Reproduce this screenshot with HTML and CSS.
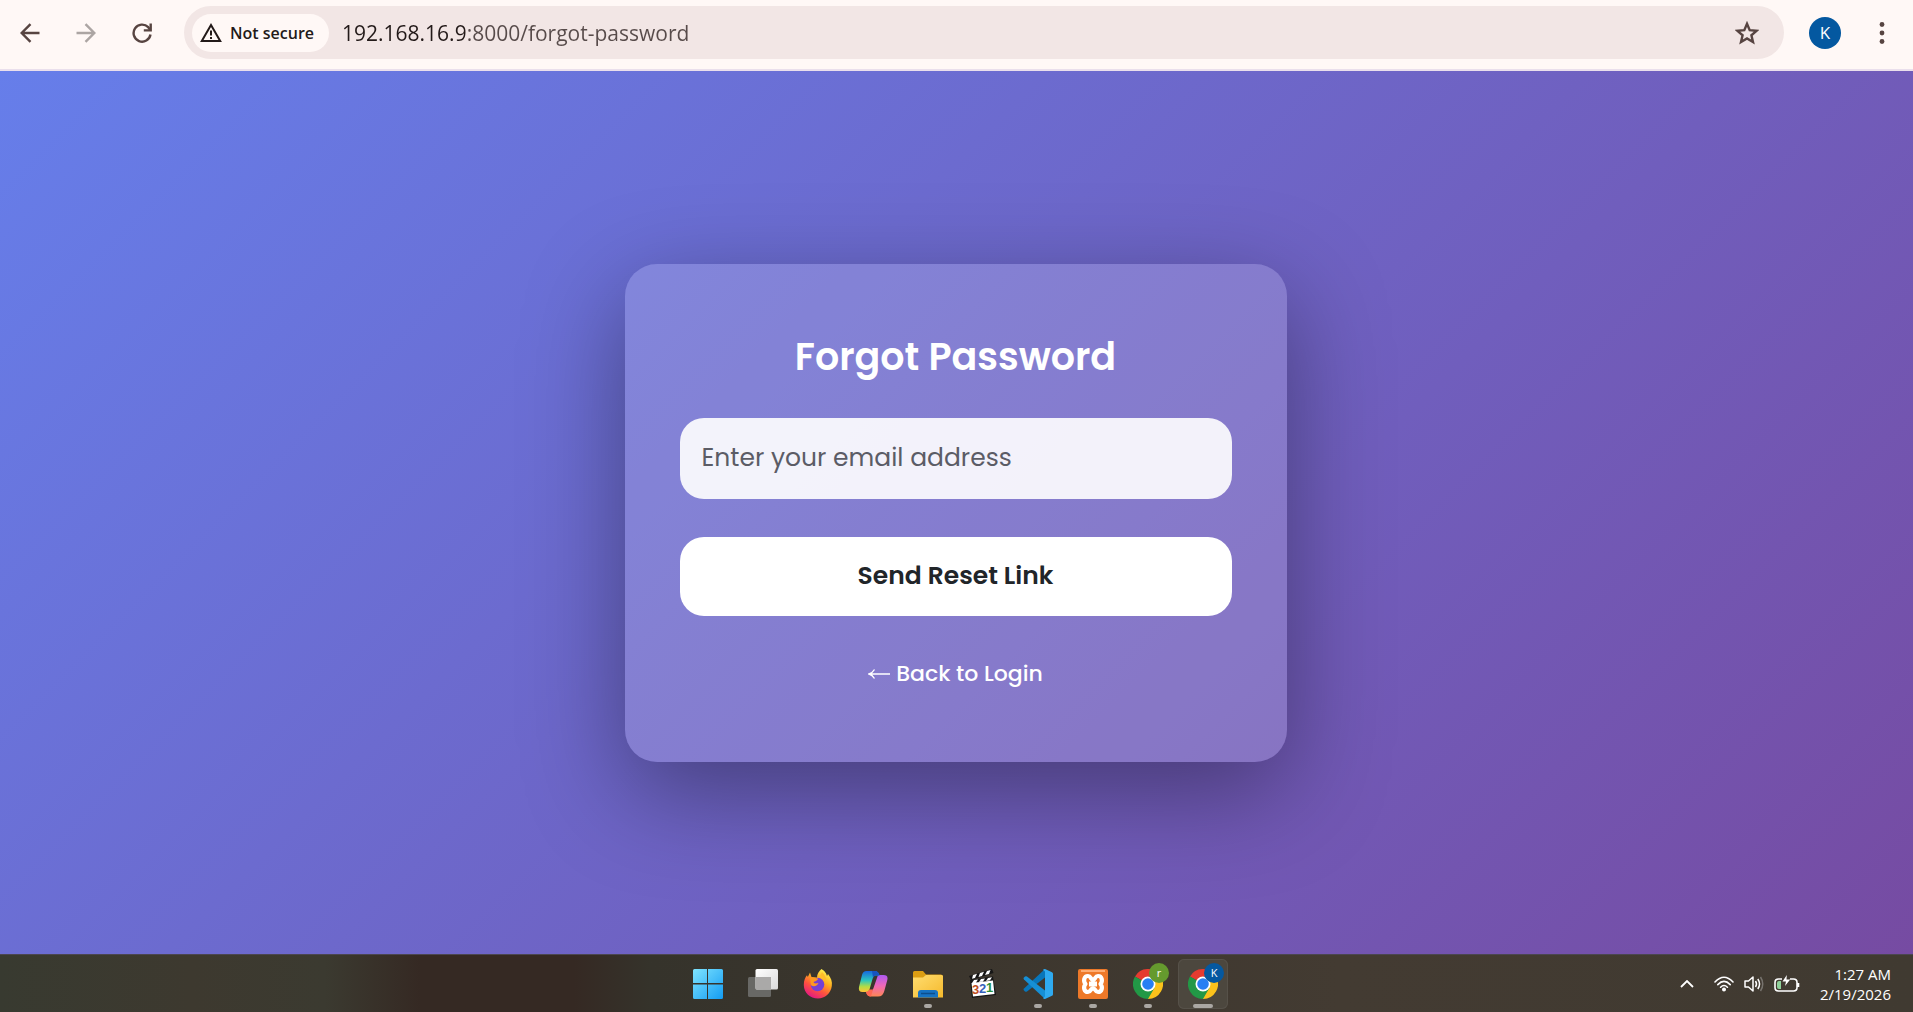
FILE: index.html
```html
<!DOCTYPE html>
<html lang="en">
<head>
    <meta charset="UTF-8">
    <meta name="viewport" content="width=device-width, initial-scale=1.0">
    <title>Forgot Password</title>
    <link rel="stylesheet" href="styles.css">
</head>
<body>
    <header class="toolbar">
        <button type="button" class="tool-btn" aria-label="Back">
            <svg width="20" height="20" viewBox="0 0 20 20" fill="none" stroke="currentColor" stroke-width="2.4"><path d="M19.5 10H2M10.5 1.200L1.700 10l8.800 8.800"/></svg>
        </button>
        <button type="button" class="tool-btn tool-btn-off" aria-label="Forward">
            <svg width="20" height="20" viewBox="0 0 20 20" fill="none" stroke="currentColor" stroke-width="2.4"><path d="M.5 10H18M9.500 1.200L18.300 10l-8.800 8.800"/></svg>
        </button>
        <button type="button" class="tool-btn" aria-label="Reload">
            <svg width="20" height="20" viewBox="0 0 20 20" fill="none" stroke="currentColor" stroke-width="2.4"><path d="M18.500 11.500A8.500 8.500 0 1 1 16.200 4.200L18.400 7"/><path d="M18.700 .5V7.400H11.800"/></svg>
        </button>
        <div class="address-bar">
            <button type="button" class="site-info">
                <svg width="22" height="20" viewBox="0 0 22 20" fill="none" stroke="currentColor" stroke-width="2"><path d="M11 2L20.200 18H1.800Z"/><path d="M11 7.500v5M11 14v2"/></svg>
                Not secure
            </button>
            <input type="text" class="url" aria-label="Address" value="192.168.16.9:8000/forgot-password">
            <button type="button" class="star-btn" aria-label="Bookmark this page">
                <svg width="24" height="24" viewBox="0 0 24 24" fill="none" stroke="currentColor" stroke-width="2.4"><path d="M12 2.800l2.700 6.400 6.900.6-5.200 4.500 1.600 6.800-6-3.600-6 3.600 1.600-6.800L2.400 9.800l6.900-.6z"/></svg>
            </button>
        </div>
        <button type="button" class="profile" aria-label="Profile">K</button>
        <button type="button" class="menu-btn" aria-label="Menu">
            <svg width="6" height="22" viewBox="0 0 6 22" fill="currentColor"><circle cx="3" cy="2.500" r="2.400"/><circle cx="3" cy="11" r="2.400"/><circle cx="3" cy="19.500" r="2.400"/></svg>
        </button>
    </header>

    <main class="page">
        <div class="card">
            <h1>Forgot Password</h1>
            <form id="forgotForm">
                <input type="email" id="email" class="email" aria-label="Email address" placeholder="Enter your email address" required>
                <button type="submit" class="send-btn">Send Reset Link</button>
            </form>
            <a href="#" class="back-link"><svg width="22" height="12" viewBox="0 0 22 12" fill="none" stroke="currentColor" stroke-width="1.400"><path d="M22 6H1.500M6.500 1.500C5 4 3.500 5.200 1 6c2.500.8 4 2 5.500 4.500"/></svg>Back to Login</a>
        </div>
    </main>

    <footer class="taskbar">
        <nav class="apps">
            <button type="button" class="app" aria-label="Start">
                <svg width="30" height="30" viewBox="0 0 30 30">
                    <defs><linearGradient id="win" x1="0" y1="0" x2="30" y2="30" gradientUnits="userSpaceOnUse"><stop offset="0" stop-color="#7fe4ff"/><stop offset="1" stop-color="#139cf3"/></linearGradient></defs>
                    <path fill="url(#win)" d="M1.500 0H14v14H0V1.500Q0 0 1.500 0zM15 0h13.500Q30 0 30 1.500V14H15zM0 15.500h14V30H1.500Q0 30 0 28.500zM15 15.500h15v13Q30 30 28.500 30H15z"/>
                </svg>
            </button>
            <button type="button" class="app" aria-label="Task view">
                <svg width="30" height="30" viewBox="0 0 30 30">
                    <defs><linearGradient id="pane" x1="0" y1="0" x2="1" y2="1"><stop offset="0" stop-color="#fff"/><stop offset="1" stop-color="#dadada"/></linearGradient></defs>
                    <rect x="0" y="8" width="23" height="20" rx="1.500" fill="#686865"/>
                    <rect x="7.500" y="0" width="22.500" height="20.500" rx="1.500" fill="url(#pane)"/>
                    <path d="M7.500 8H23v12.500H9q-1.500 0-1.500-1.500z" fill="#aaa9a8"/>
                </svg>
            </button>
            <button type="button" class="app" aria-label="Firefox">
                <svg width="30" height="30" viewBox="0 0 30 30">
                    <defs><linearGradient id="fox" x1="24" y1="2" x2="8" y2="29" gradientUnits="userSpaceOnUse"><stop offset="0" stop-color="#fff44f"/><stop offset=".35" stop-color="#ffad1f"/><stop offset=".65" stop-color="#ff533e"/><stop offset="1" stop-color="#e31587"/></linearGradient></defs>
                    <path fill="url(#fox)" d="M18.500 0c4 2.500 5 5 5.500 7l1-2c3 4 4.500 7.500 3.800 12C27.800 24.500 22 29.500 15 29.500 7 29.500 1 24 .8 16 .7 11 2.500 8 4 6.200L4.800 8 7 3.500 8.500 8 14 8.500c0-3.500 2-6.500 4.500-8.500z"/>
                    <circle cx="14.500" cy="15.500" r="6.800" fill="#7440d5"/>
                    <path fill="#ff9722" d="M7 8l8 1.500c0 2-3 3-4.500 3.500 1 2 3 1.500 5 1-1 3-5 4.500-7.700 2z"/>
                    <path fill="#ffbc29" d="M17 7c4 1 6 4 6 8 1.500-4-1-9-4-12z"/>
                </svg>
            </button>
            <button type="button" class="app" aria-label="Copilot">
                <svg width="30" height="30" viewBox="0 0 30 30">
                    <defs>
                        <linearGradient id="copA" x1="0" y1="0" x2="0" y2="1"><stop offset="0" stop-color="#1668df"/><stop offset=".45" stop-color="#2cc7bd"/><stop offset=".75" stop-color="#b5dc43"/><stop offset="1" stop-color="#ffc237"/></linearGradient>
                        <linearGradient id="copB" x1="0" y1="0" x2="0" y2="1"><stop offset="0" stop-color="#ad58f2"/><stop offset=".5" stop-color="#ef68b7"/><stop offset="1" stop-color="#ff8654"/></linearGradient>
                    </defs>
                    <path fill="url(#copB)" d="M20 6h5.500q5 0 3.800 5l-3 11Q25 27.500 20 27.500h-7q-4 0-5-5h3.500q3 0 4-3.500z"/>
                    <path fill="url(#copA)" d="M8.500 2H17q3.500 0 4.500 4.500H18q-2.500 0-3.500 3.500l-3 10.500q-.8 2.500-3.500 2.500H4.500Q0 23 1 18L4 6Q5 2 8.500 2z"/>
                    <path fill="#1753bf" d="M14 2h3q3.500 0 4.500 4.500H18q-2 0-3 2z"/>
                    <path fill="#ff6752" d="M7 23q3.500 0 4.500-2.500H15l-2 7q-4 0-5-4.500z"/>
                </svg>
            </button>
            <button type="button" class="app running" aria-label="File Explorer">
                <svg width="30" height="30" viewBox="0 0 30 30">
                    <defs><linearGradient id="dir" x1="0" y1="0" x2="1" y2="1"><stop offset="0" stop-color="#ffdd70"/><stop offset="1" stop-color="#f5b92c"/></linearGradient></defs>
                    <path fill="#dc9e13" d="M0 3.500Q0 2 1.500 2H10l3 3.500h15Q30 5.500 30 8v8H0z"/>
                    <path fill="url(#dir)" d="M0 8.500h10L13 6h16l1 1v21.500H0z"/>
                    <path fill="#1673c4" d="M5 28.500V24q0-3 3-3h14q3 0 3 3v4.500z"/>
                    <path stroke="#0c4e8d" stroke-width="1.500" d="M8 24.500h14"/>
                </svg>
            </button>
            <button type="button" class="app" aria-label="Media Player Classic">
                <svg width="30" height="30" viewBox="0 0 30 30">
                    <path fill="#161616" d="M1 7L24 0l1.500 4L3 11zM2 11l23-3.500L28 26 4 29z"/>
                    <path fill="#fff" d="M5 6l4-1.200L7 9 4 9.800zM12 4l4-1.300L14 7l-3.500 1zM19 2l3.500-1L21 5l-4 1zM6 11l4-.6L8 13.500l-4 .6zM13 10l4-.6-2 3-4 .5zM20 9l4-.7-2 3-4 .6zM3.500 14L25 11.500 26.500 25 5 27.500z"/>
                    <g font-family="Liberation Sans, sans-serif" font-weight="700" font-size="13">
                        <text x="4" y="25" fill="#c04f22">3</text>
                        <text x="11" y="24" fill="#3560ba">2</text>
                        <text x="18" y="23" fill="#28903c">1</text>
                    </g>
                </svg>
            </button>
            <button type="button" class="app running" aria-label="Visual Studio Code">
                <svg width="30" height="30" viewBox="0 0 30 30">
                    <path fill="#0876ba" d="M1 19.500L22 0v8.500L4 22.500q-1 .7-2 0l-1-1q-1-1 0-2z"/>
                    <path fill="#168fd5" d="M1 10.500L22 30v-8.500L4 7.500q-1-.7-2 0l-1 1q-1 1 0 2z"/>
                    <path fill="#2faaf0" d="M22 0l7 3.200q1 .5 1 1.500v20.600q0 1-1 1.500L22 30q-1.500 0-2-1l2-1.500v-25L20 1q.5-1 2-1z"/>
                </svg>
            </button>
            <button type="button" class="app running" aria-label="XAMPP">
                <svg width="30" height="30" viewBox="0 0 30 30">
                    <rect width="30" height="30" rx="2" fill="#ee7929"/>
                    <path d="M3 2h24" stroke="#ffad72" stroke-width="2"/>
                    <path fill="none" stroke="#fff" stroke-width="4.200" stroke-linejoin="round" d="M10 7c3 0 3 4 5 4s2-4 5-4c4 0 5 5 2.500 8C25 18 24 23 20 23c-3 0-3-4-5-4s-2 4-5 4c-4 0-5-5-2.500-8C5 12 6 7 10 7z"/>
                    <path d="M11 15h8" stroke="#fff" stroke-width="5"/>
                </svg>
            </button>
            <button type="button" class="app running" aria-label="Chrome, profile r">
                <svg width="30" height="30" viewBox="0 0 30 30">
                    <path fill="#e53b30" d="M15 15L2 7.500A15 15 0 0 1 28 7.500H15z"/>
                    <path fill="#fbc21b" d="M15 15l6.500-7.500H28A15 15 0 0 1 15 30z"/>
                    <path fill="#229846" d="M15 15l6.500 3.700L15 30A15 15 0 0 1 2 7.500z"/>
                    <circle cx="15" cy="15" r="7.500" fill="#fff"/><circle cx="15" cy="15" r="5.800" fill="#287ff3"/>
                </svg>
                <span class="badge badge-green">r</span>
            </button>
            <button type="button" class="app running active" aria-label="Chrome, profile K">
                <svg width="30" height="30" viewBox="0 0 30 30">
                    <path fill="#e53b30" d="M15 15L2 7.500A15 15 0 0 1 28 7.500H15z"/>
                    <path fill="#fbc21b" d="M15 15l6.500-7.500H28A15 15 0 0 1 15 30z"/>
                    <path fill="#229846" d="M15 15l6.500 3.700L15 30A15 15 0 0 1 2 7.500z"/>
                    <circle cx="15" cy="15" r="7.500" fill="#fff"/><circle cx="15" cy="15" r="5.800" fill="#287ff3"/>
                </svg>
                <span class="badge">K</span>
            </button>
        </nav>
        <div class="tray">
            <button type="button" class="tray-btn" aria-label="Show hidden icons">
                <svg width="14" height="8" viewBox="0 0 14 8" fill="none" stroke="currentColor" stroke-width="1.800"><path d="M1 7l6-6 6 6"/></svg>
            </button>
            <button type="button" class="tray-btn tray-status" aria-label="Network, volume and battery">
                <svg width="20" height="16" viewBox="0 0 20 16" fill="none" stroke="currentColor" stroke-width="1.600" stroke-linecap="round"><path d="M1 6Q10-3.500 19 6M3.800 8.600Q10 2.200 16.200 8.600M6.600 11.200Q10 7.800 13.400 11.200"/><circle cx="10" cy="13.500" r="1.200" fill="currentColor"/></svg>
                <svg width="20" height="18" viewBox="0 0 20 18" fill="none" stroke="currentColor" stroke-width="1.500" stroke-linejoin="round"><path d="M1 6h3.500L9 2v14l-4.500-4H1zM11.500 6q2 3 0 6M13.800 4q3.500 5 0 10"/><path d="M16.500 2q4.500 7 0 14" stroke="#77736e"/></svg>
                <svg width="26" height="18" viewBox="0 0 26 18" fill="none" stroke="currentColor" stroke-width="1.600"><path d="M8 4H4.500Q1 4 1 7.500v5Q1 16 4.500 16h15q3.500 0 3.500-3.500v-5Q23 4 19.500 4H16M24.500 8v4"/><path d="M3 8q0-2 2-2h2v8H5q-2 0-2-2z" fill="#8fd19a" stroke="none"/><path d="M12.800 0L8.500 6.500H12L11 11l5.200-6.500h-3.700z" fill="currentColor" stroke="none"/></svg>
            </button>
            <time class="clock" datetime="2026-02-19T01:27">1:27 AM<br>2/19/2026</time>
        </div>
    </footer>
</body>
</html>
```

FILE: styles.css
```css
* {
    box-sizing: border-box;
}

body {
    margin: 0;
    min-height: 100vh;
    display: flex;
    flex-direction: column;
    font-family: 'Poppins', 'Inter', sans-serif;
}

button, input {
    font-family: inherit;
    border: none;
    outline: none;
}

button {
    padding: 0;
    background: none;
    color: inherit;
    cursor: pointer;
}

svg {
    display: block;
    flex: none;
}

/* Browser toolbar */
.toolbar {
    display: flex;
    align-items: center;
    height: 71px;
    padding: 0 28px 4px 20px;
    background: #fff8f6;
    border-bottom: 2px solid #eadfec;
    color: #574441;
    font-family: 'Segoe UI', 'Open Sans', sans-serif;
}

.tool-btn {
    width: 20px;
    margin-right: 36px;
}

.tool-btn-off {
    color: #aca5a3;
}

.address-bar {
    flex: 1;
    display: flex;
    align-items: center;
    height: 53px;
    margin-right: 25px;
    margin-left: -4px;
    padding: 0 25px 0 8px;
    border-radius: 27px;
    background: #f2e6e5;
}

.site-info {
    display: flex;
    align-items: center;
    gap: 8px;
    height: 38px;
    padding: 0 15px 0 8px;
    border-radius: 19px;
    background: #fff8f6;
    color: #231a19;
    font-size: 16px;
    font-weight: 600;
    white-space: nowrap;
}

.url {
    flex: 1;
    min-width: 0;
    margin-left: 13px;
    padding: 0;
    /* host is darker than the port and path */
    background: linear-gradient(90deg, #231a19 123px, #574b4a 123px);
    -webkit-background-clip: text;
    background-clip: text;
    color: transparent;
    font-size: 21px;
}

.profile {
    width: 32px;
    height: 32px;
    margin-right: 38px;
    border-radius: 50%;
    background: #0458a0;
    color: #fff;
    font-size: 17px;
}

/* Page */
.page {
    flex: 1;
    display: flex;
    justify-content: center;
    align-items: center;
    padding-right: 2px;
    background: linear-gradient(135deg, #667eea, #764ba2);
}

.card {
    width: 100%;
    max-width: 662px;
    padding: 66px 55px 68px;
    border-radius: 32px;
    background: rgba(255, 255, 255, 0.16);
    box-shadow: 0 30px 100px rgba(0, 0, 0, 0.38);
    text-align: center;
}

h1 {
    margin: 0 0 34px;
    color: #fff;
    font-size: 38px;
    font-weight: 600;
    line-height: 54px;
}

form {
    display: flex;
    flex-direction: column;
    gap: 38px;
    margin-bottom: 38px;
}

.email {
    width: 100%;
    height: 81px;
    padding: 0 22px;
    border-radius: 24px;
    background: rgba(255, 255, 255, 0.9);
    color: #212529;
    font-size: 25px;
}

.email::placeholder {
    color: #5b5c66;
    opacity: 1;
}

.send-btn {
    height: 79px;
    border-radius: 24px;
    background: #fff;
    color: #212529;
    font-size: 25px;
    font-weight: 600;
}

.back-link {
    display: flex;
    justify-content: center;
    align-items: center;
    gap: 6px;
    color: #fff;
    font-size: 22px;
    font-weight: 500;
    line-height: 40px;
    text-decoration: none;
}

/* Windows taskbar */
.taskbar {
    display: grid;
    grid-template-columns: 1fr auto 1fr;
    align-items: center;
    height: 58px;
    padding-right: 2px;
    background: linear-gradient(90deg, #383a30 0, #3d392f 10%, #3b3a30 17%, #352923 22%, #352923 30%, #35332b 34%, #3a352d 45%, #433b32 70%, #403a31 100%);
    border-top: 1px solid #4b4651;
    color: #fff;
    font-family: 'Segoe UI', 'Open Sans', sans-serif;
}

.apps {
    grid-column: 2;
    display: flex;
    gap: 5px;
}

.app {
    position: relative;
    display: flex;
    justify-content: center;
    align-items: center;
    width: 50px;
    height: 50px;
    border-radius: 6px;
}

.app.active {
    background: #4c473e;
    box-shadow: inset 0 0 0 1px #565149;
}

.app.running::after {
    content: '';
    position: absolute;
    bottom: 1px;
    left: 50%;
    width: 8px;
    height: 4px;
    margin-left: -4px;
    border-radius: 2px;
    background: #aaa7a3;
}

.app.active::after {
    width: 20px;
    margin-left: -10px;
}

.badge {
    position: absolute;
    top: 4px;
    right: 4px;
    width: 20px;
    height: 20px;
    border-radius: 50%;
    background: #0458a0;
    font-size: 11px;
    line-height: 20px;
}

.badge-green {
    background: #659a2e;
}

.tray {
    display: flex;
    justify-content: flex-end;
    align-items: center;
    gap: 20px;
    padding-right: 20px;
}

.tray-status {
    display: flex;
    align-items: center;
    gap: 10px;
}

.clock {
    font-size: 15px;
    line-height: 20px;
    text-align: right;
}
```
